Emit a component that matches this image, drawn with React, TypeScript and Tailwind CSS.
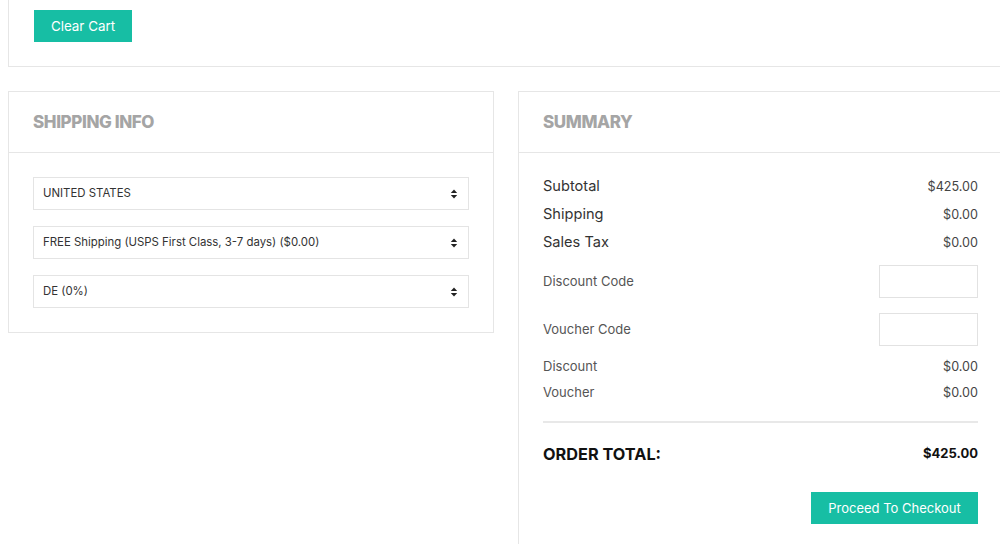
import React from "react"

const font = { fontFamily: "Inter, 'Noto Sans', sans-serif" }

const SelectBox = ({ label }: { label: string }) => (
  <div className="flex h-[33px] items-center justify-between border border-[#e4e4e4] bg-white pl-[9px] pr-[9px] text-[11.4px] text-[#333]">
    <span>{label}</span>
    <svg width="8" height="10" viewBox="0 0 8 10" className="mr-[1px]">
      <path d="M4 0.5 L7.2 4 H0.8 Z" fill="#222" />
      <path d="M4 9.5 L7.2 6 H0.8 Z" fill="#222" />
    </svg>
  </div>
)

const Row = ({ label, value, big }: { label: string; value: string; big?: boolean }) => (
  <div className={`flex items-center justify-between ${big ? "h-[28px] text-[14.6px] text-[#333]" : "h-[26px] text-[13px] text-[#555]"}`}>
    <span>{label}</span>
    <span className="text-[12.6px] text-[#444]">{value}</span>
  </div>
)

const CodeRow = ({ label }: { label: string }) => (
  <div className="flex items-center justify-between">
    <span className="text-[13px] text-[#555]">{label}</span>
    <input className="h-[33px] w-[99px] border border-[#e2e2e2] bg-white outline-none" />
  </div>
)

export default function App() {
  return (
    <div className="h-[544px] w-full overflow-hidden bg-white" style={font}>
      <div className="w-[1003px] pl-[8px]">
        {/* cart actions */}
        <div className="h-[67px] border border-t-0 border-[#e6e6e6] pl-[25px] pt-[10px]">
          <button className="h-[32px] w-[98px] bg-[#17bea4] pt-[1px] text-[13.4px] text-white">Clear Cart</button>
        </div>

        <div className="mt-[24px] flex items-start gap-[24px]">
          {/* shipping */}
          <div className="w-[486px] border border-[#e6e6e6]">
            <div className="flex h-[61px] items-center border-b border-[#e6e6e6] px-[24px] pt-[2px]">
              <h2 className="text-[17px] font-extrabold tracking-[-0.4px] text-[#a5a5a5]">SHIPPING INFO</h2>
            </div>
            <div className="flex flex-col gap-[16px] px-[24px] py-[24px]">
              <SelectBox label="UNITED STATES" />
              <SelectBox label="FREE Shipping (USPS First Class, 3-7 days) ($0.00)" />
              <SelectBox label="DE (0%)" />
            </div>
          </div>

          {/* summary */}
          <div className="h-[470px] w-[485px] border border-b-0 border-[#e6e6e6]">
            <div className="flex h-[61px] items-center border-b border-[#e6e6e6] px-[24px] pt-[2px]">
              <h2 className="text-[17px] font-extrabold tracking-[-0.4px] text-[#a5a5a5]">SUMMARY</h2>
            </div>
            <div className="px-[24px] pt-[20px]">
              <Row big label="Subtotal" value="$425.00" />
              <Row big label="Shipping" value="$0.00" />
              <Row big label="Sales Tax" value="$0.00" />
              <div className="mt-[8px] flex flex-col gap-[15px]">
                <CodeRow label="Discount Code" />
                <CodeRow label="Voucher Code" />
              </div>
              <div className="mt-[8px]">
                <Row label="Discount" value="$0.00" />
                <Row label="Voucher" value="$0.00" />
              </div>
              <div className="mt-[15px] border-t-2 border-[#e8e8e8]" />
              <div className="mt-[19px] flex h-[24px] items-center justify-between">
                <span className="text-[16.3px] font-bold text-[#111]">ORDER TOTAL:</span>
                <span className="text-[13px] font-bold text-[#111]">$425.00</span>
              </div>
              <div className="mt-[26px] flex justify-end">
                <button className="h-[32px] w-[167px] bg-[#17bea4] pt-[1px] text-[13px] text-white">Proceed To Checkout</button>
              </div>
            </div>
          </div>
        </div>
      </div>
    </div>
  )
}
